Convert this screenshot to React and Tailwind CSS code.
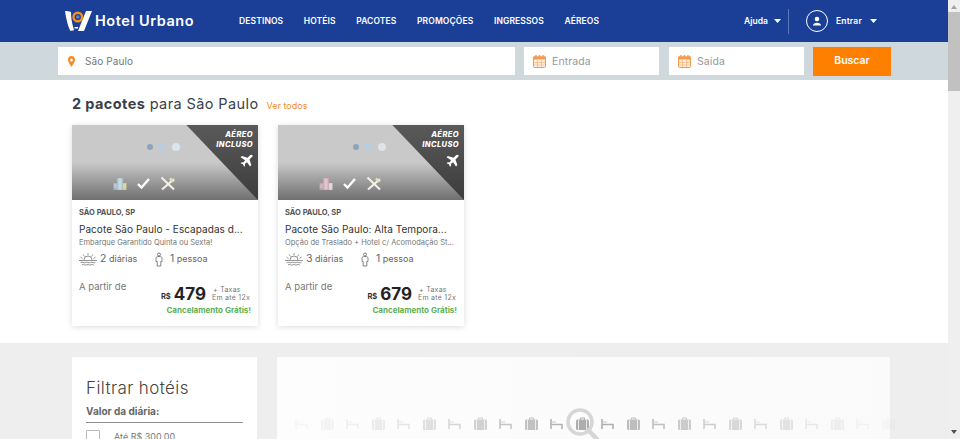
const font = { fontFamily: "Inter" };

const Caret = ({ className = "" }) => (
  <svg width="7" height="4" viewBox="0 0 7 4" className={className}>
    <path d="M0 0h7L3.500 4z" fill="#fff" />
  </svg>
);

const Logo = () => (
  <svg width="27" height="22" viewBox="0 0 27 22" className="shrink-0">
    <path d="M0 1c2 0 4 0 6 1 0 6 1 12 3 18l1-.2c-2 1-4 1-5 .7C2 14 1 7 0 1z" fill="#fff" />
    <path d="M21 1h6l-8 20h-6z" fill="#fff" />
    <path d="M9.500 17h3.500v1.500H9.500z" fill="#fff" />
    <circle cx="12.800" cy="7" r="4.300" fill="none" stroke="#f5901e" strokeWidth="2.400" />
    <circle cx="12.800" cy="7" r="1.800" fill="#fff" opacity="0.35" />
  </svg>
);

const Calendar = () => (
  <svg width="13" height="13" viewBox="0 0 13 13" className="shrink-0">
    <rect x="0.500" y="2" width="12" height="10.500" rx="1" fill="#fdeee0" stroke="#f79a4c" />
    <rect x="0" y="1.500" width="13" height="3" fill="#f79a4c" />
    <path d="M3 0v3M6.500 0v3M10 0v3" stroke="#f79a4c" strokeWidth="1.400" />
    <path d="M4.500 5v7M8.500 5v7M1 7.500h11M1 10h11" stroke="#f9b47d" strokeWidth="0.700" />
  </svg>
);

const Pin = () => (
  <svg width="7" height="11" viewBox="0 0 8 11" preserveAspectRatio="none">
    <path d="M4 0a4 4 0 0 1 4 4c0 2.500-3 5-4 7C3 9 0 6.500 0 4a4 4 0 0 1 4-4z" fill="#f68b28" />
    <circle cx="4" cy="4" r="1.500" fill="#fff" />
  </svg>
);

const Plane = () => (
  <svg width="13" height="13" viewBox="0 0 24 24">
    <path d="M23 2.500c-1-1.500-3-1.500-4.500 0L14 7 3.500 3.500 1 6l8.500 5.500L6 15.500l-3-.5L1 17l4.500 2 2 4.500 2-2-.5-3 4-3.500L18.500 23l2.500-2.500L17.500 10l4.500-4.500c1.500-1 2-2 1-3z" fill="#fff" />
  </svg>
);

const Building = ({ color, side }) => (
  <svg width="14" height="14" viewBox="0 0 14 14">
    <rect x="4" y="1" width="6" height="12" fill={color} />
    <rect x="0.500" y="6" width="3.500" height="7" fill={color} opacity="0.8" />
    <rect x="10" y="6" width="3.500" height="7" fill={side} />
    <path d="M5 3h4M5 5h4M5 7h4M5 9h4M5 11h4M1 8h3M1 10h3M10 8h3M10 10h3M7 1v12" stroke="#fff" strokeWidth="0.600" opacity="0.75" />
  </svg>
);

const Check = () => (
  <svg width="13" height="11" viewBox="0 0 13 11">
    <path d="M1 6l3.500 3.500L12 1" fill="none" stroke="#fff" strokeWidth="2.400" />
  </svg>
);

const Cutlery = () => (
  <svg width="16" height="15" viewBox="0 0 16 15">
    <path d="M1.500 1.500l12.500 12" stroke="#f4f1e6" strokeWidth="2" />
    <path d="M14 3L2 13.500" stroke="#f4f1e6" strokeWidth="2" />
    <path d="M10.500 1.500l4.500 3.500-2.500 1.500-3.500-3z" fill="#e8dfb8" />
  </svg>
);

const Sun = () => (
  <svg width="18" height="14" viewBox="0 0 18 14" fill="none" stroke="#666" strokeWidth="0.700" className="shrink-0">
    <path d="M5 8a4 4 0 0 1 8 0M9 1v2M4 2.500l1.500 2M14 2.500l-1.500 2M1.500 5l2 1.500M16.500 5l-2 1.500" />
    <path d="M0 8.500h18M1.500 10.500c2-1 3 1 5 0s3 1 5 0 3 1 5 0M3 12.800c2-1 3 1 5 0s2 1 4 0 2 .6 3 0" />
  </svg>
);

const Person = () => (
  <svg width="8" height="15" viewBox="0 0 8 14" fill="none" stroke="#666" strokeWidth="0.800" className="shrink-0">
    <circle cx="4" cy="2" r="1.500" />
    <path d="M1 5.500c0-1 1-1.500 3-1.500s3 .5 3 1.500V9H5.800v4.500H2.200V9H1z" />
  </svg>
);

const Bed = ({ opacity }) => (
  <svg width="13" height="10" viewBox="0 0 13 10" style={{ opacity }} className="shrink-0 mt-[2px]">
    <path d="M1 0v10" stroke="#a8a8a8" strokeWidth="1.600" />
    <path d="M2 3h4" stroke="#c8c8c8" strokeWidth="1.200" />
    <path d="M1 5.500h11V10" fill="none" stroke="#a8a8a8" strokeWidth="1.600" />
  </svg>
);

const Bag = ({ opacity }) => (
  <svg width="13" height="13" viewBox="0 0 13 13" style={{ opacity }} className="shrink-0">
    <path d="M4.500 2.500V1h4v1.500" fill="none" stroke="#aaa" />
    <rect x="0" y="2.500" width="13" height="10.500" rx="1.500" fill="#aeaeae" />
    <path d="M2.500 2.500v10.500M10.500 2.500v10.500" stroke="#e8e8e8" />
  </svg>
);

const Card = ({ title, sub, nights, price, buildingColor, buildingSide }) => (
  <div className="w-[186px] h-[201px] bg-white shadow-[0_1px_6px_rgba(0,0,0,0.14)] flex flex-col">
    <div className="relative h-[75px] bg-gradient-to-b from-[#c9c9c9] from-50% to-[#707070] overflow-hidden">
      <div className="absolute inset-0 bg-gradient-to-b from-[#5a5a5a] to-[#3c3c3c] [clip-path:polygon(61.500%_0,100%_0,100%_100%)]" />
      <div className="absolute left-[75px] top-[18px] flex items-center gap-[5px]">
        <span className="size-[6px] rounded-full bg-[#8aa6bf]" />
        <span className="size-[8px] rounded-full bg-[#b9cddd]" />
        <span className="size-[8px] ml-[1px] rounded-full bg-[#dbe5ec]" />
      </div>
      <div className="absolute right-[5px] top-[5px] text-right text-white text-[7.500px] leading-[10px] font-extrabold italic tracking-[0.4px]">
        AÉREO<br />INCLUSO
      </div>
      <div className="absolute right-[5px] top-[29px]"><Plane /></div>
      <div className="absolute left-[41px] top-[51px] flex items-center gap-[10px]">
        <Building color={buildingColor} side={buildingSide} />
        <Check />
        <Cutlery />
      </div>
    </div>
    <div className="flex flex-col flex-1 pl-[7px] pr-[7px] pt-[8px]">
      <div className="text-[7.500px] leading-[10px] font-bold text-[#555]">SÃO PAULO, SP</div>
      <div className="mt-[4px] text-[10px] leading-[14px] text-[#333] tracking-[0.05px] whitespace-nowrap">{title}</div>
      <div className="mt-[2px] text-[7.500px] leading-[10px] text-[#777] whitespace-nowrap">{sub}</div>
      <div className="mt-[3px] flex items-center h-[16px] text-[9px] text-[#666] whitespace-nowrap">
        <Sun />
        <span className="ml-[3px] w-[55px]"><span className="text-[10.500px]">{nights}</span> diárias</span>
        <Person />
        <span className="ml-[7px]"><span className="text-[10.500px]">1</span> pessoa</span>
      </div>
      <div className="mt-[7px] flex justify-between h-[32px]">
        <span className="text-[9.500px] leading-[14px] text-[#777] mt-[6px]">A partir de</span>
        <div className="flex items-center h-[22px] mt-[9px] mr-[1px]">
          <span className="text-[7.500px] font-bold text-[#333] mt-[6px] mr-[3px]">R$</span>
          <span className="text-[17px] font-bold text-[#222] leading-[20px] mr-[6px]">{price}</span>
          <span className="text-[7px] leading-[8px] text-[#777] tracking-[0.25px] whitespace-nowrap">
            <span className="block pl-[1px]">+ Taxas</span>
            <span className="block">Em até 12x</span>
          </span>
        </div>
      </div>
      <div className="text-right text-[8px] leading-[10px] font-bold text-[#5cb058] -mt-[1px]">Cancelamento Grátis!</div>
    </div>
  </div>
);

const nav = ["DESTINOS", "HOTÉIS", "PACOTES", "PROMOÇÕES", "INGRESSOS", "AÉREOS"];

const SearchDate = ({ label }) => (
  <div className="w-[135px] h-[28px] bg-white flex items-center pl-[9px] gap-[6px] text-[10.500px] text-[#999] tracking-[0.1px]">
    <Calendar />
    <span className="mt-[1px]">{label}</span>
  </div>
);

// bed and bag alternate, the faded ends go out from the magnifier at index 11
const loaderItems = [0.08, 0.12, 0.16, 0.22, 0.28, 0.36, 0.45, 0.55, 0.65, 0.75, 0.85, 1, 0.9, 0.8, 0.72, 0.62, 0.55, 0.45, 0.38, 0.3, 0.22, 0.16, 0.1, 0.06];

const App = () => {
  return (
    <div className="flex h-[439px] w-[960px] overflow-hidden text-[#333]" style={font}>
      <div className="w-[948px] shrink-0 overflow-hidden">
        <header className="h-[42px] bg-[#1b3f97] flex items-center pl-[65px] text-white">
          <Logo />
          <span className="ml-[3px] text-[14.500px] font-semibold tracking-[0.55px] whitespace-nowrap">Hotel Urbano</span>
          <nav className="ml-[45px] flex gap-[20.600px] text-[8.500px] font-semibold tracking-[0.1px] whitespace-nowrap">
            {nav.map((item) => (
              <span key={item}>{item}</span>
            ))}
          </nav>
          <div className="ml-auto flex items-center text-[8.500px] font-semibold">
            <span>Ajuda</span>
            <Caret className="ml-[6px]" />
            <span className="ml-[7px] w-px h-[25px] bg-[#5d78b8]" />
            <span className="ml-[17px] size-[22px] rounded-full border border-white flex items-center justify-center">
              <svg width="10" height="10" viewBox="0 0 10 10">
                <circle cx="5" cy="3" r="2.300" fill="#fff" />
                <path d="M1 9.500c0-2 2-2.800 4-2.800s4 .8 4 2.800z" fill="#fff" />
              </svg>
            </span>
            <span className="ml-[8px] tracking-[0.2px]">Entrar</span>
            <Caret className="ml-[8px] mr-[71px]" />
          </div>
        </header>
        <div className="h-[38px] bg-[#cfd8dd] flex items-center pl-[58px]">
          <div className="w-[457px] h-[28px] bg-white flex items-center pl-[10px] gap-[10px] text-[10px] text-[#777] tracking-[0.1px]">
            <Pin />
            São Paulo
          </div>
          <div className="ml-[9px]"><SearchDate label="Entrada" /></div>
          <div className="ml-[10px]"><SearchDate label="Saída" /></div>
          <div className="ml-[9px] w-[78px] h-[29px] bg-[#ff7f00] text-white text-[10.500px] font-semibold flex items-center justify-center">Buscar</div>
        </div>
        <section className="h-[263px] bg-white pl-[72px] pt-[13px]">
          <div className="flex items-baseline h-[22px]">
            <span className="text-[14.500px] text-[#3a3f4a] tracking-[0.4px]"><b className="font-bold">2 pacotes</b> para São Paulo</span>
            <span className="ml-[8px] text-[9px] text-[#f68b28]">Ver todos</span>
          </div>
          <div className="flex gap-[20px] mt-[10px]">
            <Card title="Pacote São Paulo - Escapadas d..." sub="Embarque Garantido Quinta ou Sexta!" nights="2" price="479" buildingColor="#a9c3cf" buildingSide="#d8c98c" />
            <Card title="Pacote São Paulo: Alta Tempora..." sub="Opção de Traslado + Hotel c/ Acomodação St..." nights="3" price="679" buildingColor="#cda6b6" buildingSide="#d9cfd4" />
          </div>
        </section>
        <section className="h-[96px] bg-[#eeeeee] pl-[72px] pt-[14px] flex">
          <div className="w-[185px] h-[100px] bg-white px-[14px] pt-[19px]">
            <div className="text-[17px] leading-[24px] font-light text-[#444] tracking-[0.4px]">Filtrar hotéis</div>
            <div className="mt-[5px] pb-[4px] text-[10px] leading-[13px] font-bold text-[#666] border-b border-[#8c8c8c]">Valor da diária:</div>
            <div className="mt-[7px] flex items-center text-[9px] text-[#777]">
              <span className="size-[14px] rounded-[1px] border border-[#bbb] bg-white" />
              <span className="ml-[14px]">Até R$ 300,00</span>
            </div>
          </div>
          <div className="relative ml-[20px] w-[613px] h-[100px] bg-gradient-to-r from-[#fdfdfd] to-[#fbfafa]">
            <div className="absolute left-[18px] top-[60px] flex gap-[12.500px]">
              {loaderItems.map((opacity, i) =>
                i % 2 === 0 ? <Bed key={i} opacity={opacity} /> : <Bag key={i} opacity={opacity} />
              )}
            </div>
            <svg width="36" height="36" viewBox="0 0 36 36" className="absolute left-[288px] top-[50px]">
              <circle cx="15" cy="15" r="12" fill="none" stroke="#d6d6d6" strokeWidth="3.500" />
              <path d="M24 24l9 9" stroke="#d6d6d6" strokeWidth="4.500" />
            </svg>
          </div>
        </section>
      </div>
      <aside className="w-[12px] bg-[#efefef] flex flex-col items-center relative">
        <svg width="6" height="4" viewBox="0 0 6 4" className="mt-[5px]"><path d="M3 0l3 4H0z" fill="#a3a3a3" /></svg>
        <div className="mt-[3px] w-full h-[79px] bg-[#c1c1c1]" />
        <svg width="6" height="4" viewBox="0 0 6 4" className="absolute bottom-[5px] left-[3px]"><path d="M0 0h6L3 4z" fill="#505050" /></svg>
      </aside>
    </div>
  );
};

export default App;
